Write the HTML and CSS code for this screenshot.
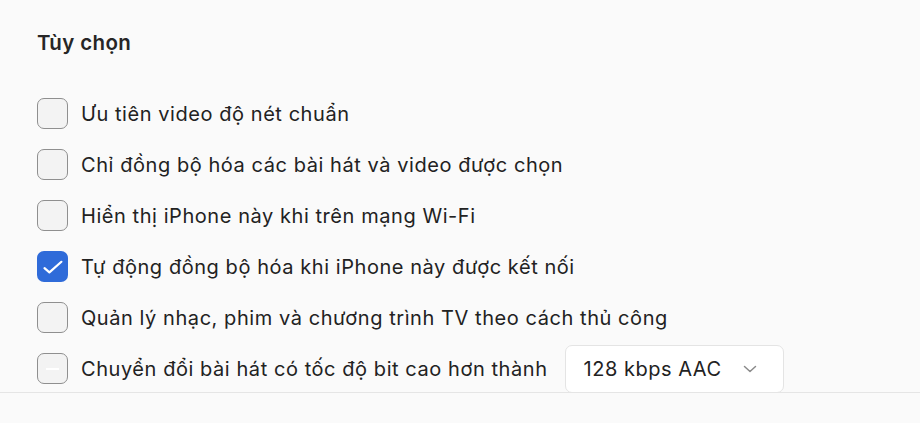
FILE: index.html
```html
<!DOCTYPE html>
<html lang="vi">
<head>
<meta charset="utf-8">
<title>Tùy chọn</title>
<link rel="stylesheet" href="styles.css">
</head>
<body>
<main class="panel">
  <h2 class="title">Tùy chọn</h2>
  <ul class="options">
    <li class="option"><span class="box"></span><span class="label">Ưu tiên video độ nét chuẩn</span></li>
    <li class="option"><span class="box"></span><span class="label">Chỉ đồng bộ hóa các bài hát và video được chọn</span></li>
    <li class="option"><span class="box"></span><span class="label">Hiển thị iPhone này khi trên mạng Wi-Fi</span></li>
    <li class="option"><span class="box checked"><svg viewBox="0 0 31 31" width="31" height="31"><path d="M7.5 17.2 L12.4 21.4 L24.4 10.8" fill="none" stroke="#fff" stroke-width="2.2" stroke-linecap="round" stroke-linejoin="round"/></svg></span><span class="label">Tự động đồng bộ hóa khi iPhone này được kết nối</span></li>
    <li class="option"><span class="box"></span><span class="label">Quản lý nhạc, phim và chương trình TV theo cách thủ công</span></li>
    <li class="option"><span class="box dash"></span><span class="label">Chuyển đổi bài hát có tốc độ bit cao hơn thành</span>
      <span class="select"><span class="select-text">128 kbps AAC</span><svg class="chev" viewBox="0 0 14 8" width="14" height="8"><path d="M1.5 1.5 L7 6.5 L12.5 1.5" fill="none" stroke="#8a8a8a" stroke-width="1.5" stroke-linecap="round" stroke-linejoin="round"/></svg></span>
    </li>
  </ul>
</main>
<footer class="footer"></footer>
</body>
</html>
```
FILE: styles.css
```css
html, body {
  margin: 0;
  padding: 0;
  background: #fafafa;
}
body {
  width: 920px;
  height: 423px;
  overflow: hidden;
  font-family: Inter, "Noto Sans", "DejaVu Sans", sans-serif;
  color: #222222;
}
.panel {
  height: 392px;
  box-sizing: border-box;
  padding: 29px 0 0 37px;
  overflow: hidden;
}
.title {
  margin: 0;
  font-size: 20.5px;
  font-weight: 600;
  line-height: 28px;
  color: #262626;
  letter-spacing: 0.35px;
}
.options {
  list-style: none;
  margin: 41px 0 0 0;
  padding: 0;
  display: flex;
  flex-direction: column;
  gap: 20px;
}
.option {
  display: flex;
  align-items: center;
  height: 31px;
}
.box {
  width: 31px;
  height: 31px;
  box-sizing: border-box;
  border: 1.5px solid #8f8f8f;
  border-radius: 7px;
  background: #f3f3f3;
  flex: none;
  position: relative;
}
.box.checked {
  border: none;
  background: #2f6bd9;
}
.box.checked svg {
  display: block;
}
.box.dash::after {
  content: "";
  position: absolute;
  left: 8px;
  right: 8px;
  top: 14px;
  height: 1.5px;
  background: #ffffff;
}
.label {
  margin-left: 13px;
  font-size: 20px;
  line-height: 28px;
  letter-spacing: 0.56px;
  white-space: nowrap;
}
.select {
  display: flex;
  align-items: center;
  justify-content: space-between;
  margin: -8px 0 -9px 17px;
  width: 219px;
  height: 48px;
  box-sizing: border-box;
  padding: 0 26px 0 18px;
  background: #ffffff;
  border: 1px solid #e4e4e4;
  border-radius: 7px;
  flex: none;
}
.select-text {
  font-size: 20px;
  letter-spacing: 0.52px;
  color: #222222;
}
.chev {
  display: block;
}
.footer {
  height: 31px;
  border-top: 1px solid #e5e5e5;
  background: #fafafa;
}
```
